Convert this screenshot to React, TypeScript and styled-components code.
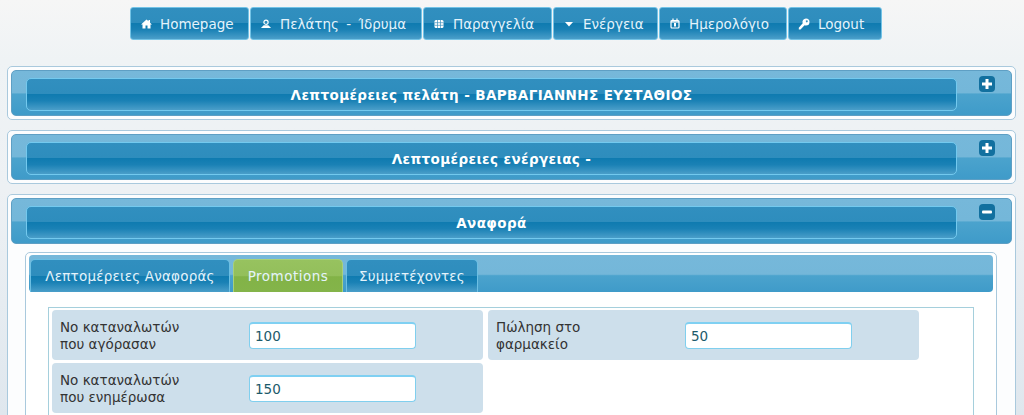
import { createGlobalStyle, styled } from 'styled-components';

const GlobalStyle = createGlobalStyle`
  html, body {
    height: 100%;
    margin: 0;
    overflow: hidden;
  }

  body {
    font-family: "DejaVu Sans", Verdana, sans-serif;
    background: linear-gradient(#f6f6f6 0, #eff3f5 60px, #edf1f4 190px, #dfe7ee 415px);
  }
`;

const glossy = `
  background: linear-gradient(#318fbf 0, #2e8dbd 49%, #0f7bb0 50%, #1a81b5 70%, #4a9ec9 100%);
`;

const HomeIcon = () => (
  <svg width="11" height="10" viewBox="0 0 11 10" fill="#fff">
    <path d="M5.500 .5 7.500 2.300V1H9V3.700L11 5.500H9.500V9.500H6.500V6.500H4.500V9.500H1.500V5.500H0z" />
  </svg>
);

const PersonIcon = () => (
  <svg width="13" height="10" viewBox="0 0 13 10" fill="none" stroke="#fff">
    <circle cx="6.500" cy="3" r="2.300" strokeWidth="1.300" />
    <path d="M4 6.300h5L12 9.200H1z" fill="#fff" stroke="none" />
  </svg>
);

const TableIcon = () => (
  <svg width="10" height="10" viewBox="0 0 10 10">
    <rect x=".5" y="1" width="9" height="8" rx="1.500" fill="#fff" />
    <path d="M3.500 1v8M6.500 1v8M.5 3.700h9M.5 6.300h9" stroke="#3f92bd" strokeWidth=".7" />
  </svg>
);

const CaretIcon = () => (
  <svg width="10" height="10" viewBox="0 0 10 10" fill="#fff">
    <path d="M1 3h8L5 7.500z" />
  </svg>
);

const CalendarIcon = () => (
  <svg width="10" height="11" viewBox="0 0 10 11" fill="none" stroke="#fff">
    <rect x="1" y="2.500" width="8" height="7.500" rx="1" strokeWidth="1.200" />
    <path d="M1 3.800h8M3 .5v2.500M7 .5v2.500" strokeWidth="1.200" />
    <rect x="4" y="5" width="2" height="3.500" fill="#fff" stroke="none" />
  </svg>
);

const KeyIcon = () => (
  <svg width="12" height="12" viewBox="0 0 12 12" fill="#fff" fillRule="evenodd">
    <path d="M8 .5a3.500 3.500 0 0 1 0 7c-.5 0-1-.1-1.400-.3L2.500 11.500H.8V9.700L4.700 5.300A3.500 3.500 0 0 1 8 .5zM8.800 2.300a1 1 0 1 0 .01 0z" />
  </svg>
);

const ToggleButton = ({ open }: { open: boolean }) => (
  <Toggle>
    <svg width="10" height="10" viewBox="0 0 10 10" fill="#fff">
      {open ? (
        <rect x="0" y="3.500" width="10" height="3" rx="1" />
      ) : (
        <path d="M3.500 0h3v3.500H10v3H6.500V10h-3V6.500H0v-3h3.500z" />
      )}
    </svg>
  </Toggle>
);

const navItems = [
  { label: 'Homepage', icon: <HomeIcon />, width: 119 },
  { label: 'Πελάτης - Ίδρυμα', icon: <PersonIcon />, width: 172 },
  { label: 'Παραγγελία', icon: <TableIcon />, width: 129 },
  { label: 'Ενέργεια', icon: <CaretIcon />, width: 105 },
  { label: 'Ημερολόγιο', icon: <CalendarIcon />, width: 128 },
  { label: 'Logout', icon: <KeyIcon />, width: 94 },
];

const Panel = ({ title, open }: { title: string; open: boolean }) => (
  <PanelHeader>
    <PanelBar>{title}</PanelBar>
    <ToggleButton open={open} />
  </PanelHeader>
);

const Field = ({ label, value }: { label: string[]; value: string }) => (
  <FieldRow>
    <FieldLabel>
      {label[0]}
      <br />
      {label[1]}
    </FieldLabel>
    <FieldInput defaultValue={value} />
  </FieldRow>
);

export default function App() {
  return (
    <>
      <GlobalStyle />
      <Nav>
        {navItems.map((item) => (
          <NavButton key={item.label} $width={item.width}>
            <NavIcon>{item.icon}</NavIcon>
            {item.label}
          </NavButton>
        ))}
      </Nav>
      <Panels>
        <PanelBox>
          <Panel title="Λεπτομέρειες πελάτη - ΒΑΡΒΑΓΙΑΝΝΗΣ ΕΥΣΤΑΘΙΟΣ" open={false} />
        </PanelBox>
        <PanelBox>
          <Panel title="Λεπτομέρειες ενέργειας -" open={false} />
        </PanelBox>
        <PanelBox>
          <Panel title="Αναφορά" open />
          <Content>
            <Tabs>
              <Tab $width={200}>Λεπτομέρειες Αναφοράς</Tab>
              <Tab $width={110} $active>
                Promotions
              </Tab>
              <Tab $width={132}>Συμμετέχοντες</Tab>
            </Tabs>
            <FormBox>
              <Field label={['Νο καταναλωτών', 'που αγόρασαν']} value="100" />
              <Field label={['Πώληση στο', 'φαρμακείο']} value="50" />
              <Field label={['Νο καταναλωτών', 'που ενημέρωσα']} value="150" />
            </FormBox>
          </Content>
        </PanelBox>
      </Panels>
    </>
  );
}

const Nav = styled.nav`
  display: flex;
  gap: 1px;
  padding: 7px 0 0 130px;
`;

const NavButton = styled.div<{ $width: number }>`
  display: flex;
  align-items: center;
  box-sizing: border-box;
  width: ${(p) => p.$width}px;
  height: 33px;
  padding-left: 9px;

  color: #e4f3fb;
  font-size: 13.5px;
  word-spacing: 3px;
  white-space: nowrap;

  ${glossy}
  border: 1px solid #73c3e6;
  border-radius: 3px;
`;

const NavIcon = styled.span`
  display: flex;
  justify-content: center;
  width: 12px;
  margin-right: 8px;
`;

const Panels = styled.div`
  display: flex;
  flex-direction: column;
  gap: 10px;
  height: 349px;
  margin: 26px 8px 0 7px;
  overflow: hidden;
`;

const PanelBox = styled.section`
  flex-shrink: 0;
  padding: 3px;

  background: #fcfdfe;
  border: 1px solid #a9c9dd;
  border-radius: 5px;
`;

const PanelHeader = styled.div`
  position: relative;
  display: flex;
  height: 46px;
  padding: 7px 54px 4px 14px;
  box-sizing: border-box;

  background: linear-gradient(#76b8da 0, #74b7d9 50%, #4ba3cd 52%, #3f9bc9 100%);
  border: 1px solid #5e9fc4;
  border-radius: 5px;
`;

const PanelBar = styled.div`
  display: flex;
  align-items: center;
  justify-content: center;
  flex: 1;

  color: #fff;
  font-size: 13.5px;
  font-weight: 700;
  letter-spacing: 0.4px;

  ${glossy}
  border: 1px solid #73c9ee;
  border-radius: 5px;
`;

const Toggle = styled.div`
  position: absolute;
  top: 5px;
  right: 16px;

  display: flex;
  align-items: center;
  justify-content: center;
  width: 16px;
  height: 16px;

  background: #12709f;
  border-radius: 4px;
`;

const Content = styled.div`
  margin: 8px 15px 0 14px;
  padding: 2px 3px 0;
  height: 200px;

  background: #fff;
  border: 1px solid #a9c9dd;
  border-radius: 5px 5px 0 0;
`;

const Tabs = styled.div`
  display: flex;
  gap: 3px;
  height: 37px;
  box-sizing: border-box;
  padding: 4px 0 0 1px;

  background: linear-gradient(#76b8da 0, #74b7d9 52%, #4ba3cd 56%, #3f9bc9 100%);
  border-radius: 4px;
`;

const Tab = styled.div<{ $width: number; $active?: boolean }>`
  display: flex;
  align-items: center;
  justify-content: center;
  box-sizing: border-box;
  width: ${(p) => p.$width}px;

  color: #e4f3fb;
  font-size: 13.5px;
  letter-spacing: ${(p) => (p.$active ? '0.5px' : '0.2px')};
  white-space: nowrap;

  background: ${(p) =>
    p.$active
      ? 'linear-gradient(#97c25f 0, #93bf5b 50%, #82b347 52%, #84b44a 100%)'
      : 'linear-gradient(#318fbf 0, #2e8dbd 49%, #0f7bb0 50%, #1a81b5 70%, #4a9ec9 100%)'};
  border: 1px solid ${(p) => (p.$active ? '#a8d07a' : '#6cbfe3')};
  border-bottom: 0;
  border-radius: 5px 5px 0 0;
`;

const FormBox = styled.div`
  display: grid;
  grid-template-columns: 431px 431px;
  grid-auto-rows: 50px;
  column-gap: 5px;
  row-gap: 3px;
  margin: 15px 19px 0 19px;
  padding: 2px 3px;
  height: 200px;

  background: #fff;
  border: 1px solid #a5cfdc;
`;

const FieldRow = styled.div`
  display: flex;
  align-items: center;
  box-sizing: border-box;
  padding-left: 8px;

  background: #cddfeb;
  border-radius: 4px;
`;

const FieldLabel = styled.div`
  width: 189px;
  padding-top: 2px;

  color: #333;
  font-size: 13.5px;
  line-height: 17px;
`;

const FieldInput = styled.input`
  box-sizing: border-box;
  width: 167px;
  height: 27px;
  padding: 0 5px;

  color: #1c5a6b;
  font-family: inherit;
  font-size: 13.5px;

  background: #fff;
  border: 1px solid #80cfee;
  border-top: 2px solid #7fd0f2;
  border-radius: 4px;
  outline: none;
`;
